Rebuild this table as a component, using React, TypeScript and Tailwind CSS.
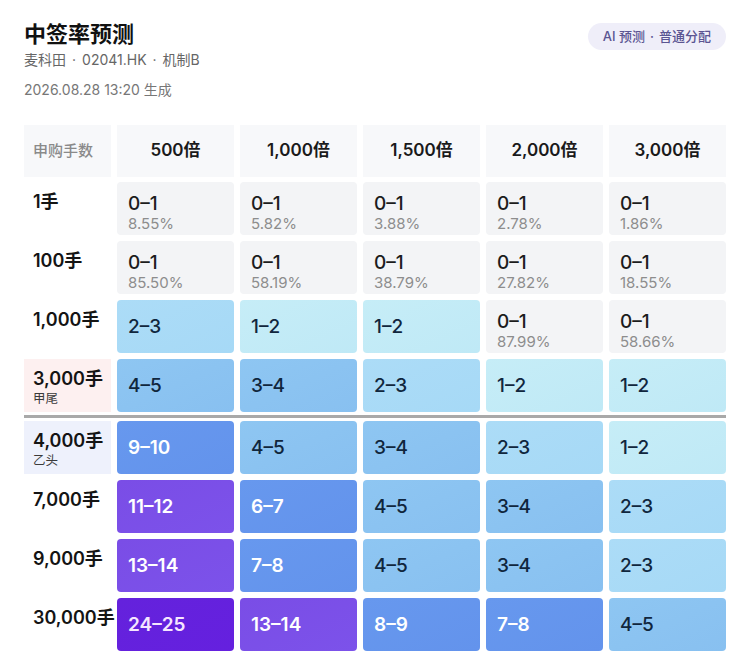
import React from 'react'

type Level = 0 | 1 | 2 | 3 | 4 | 5 | 6

type Cell = { v: string; pct?: string; lv: Level }

type Row = { label: string; sub?: string; tone?: 'pink' | 'blue'; cells: Cell[] }

const multiples = ['500倍', '1,000倍', '1,500倍', '2,000倍', '3,000倍']

const levelClass: Record<Level, string> = {
  0: 'bg-[#f3f4f6] text-[#1c1c1c]',
  1: 'bg-gradient-to-br from-[#c6edf7] to-[#bfe9f6] text-[#10263d]',
  2: 'bg-gradient-to-br from-[#acdcf7] to-[#a6d9f6] text-[#10263d]',
  3: 'bg-gradient-to-br from-[#8ec6f2] to-[#88c0f0] text-[#10263d]',
  4: 'bg-gradient-to-br from-[#6798ee] to-[#6393ec] text-white font-semibold',
  5: 'bg-gradient-to-br from-[#7a4de6] to-[#7c52ea] text-white font-semibold',
  6: 'bg-gradient-to-br from-[#6422dc] to-[#6520df] text-[#f6e6ff] font-semibold',
}

const g = (pct: string): Cell => ({ v: '0–1', pct, lv: 0 })
const c = (v: string, lv: Level): Cell => ({ v, lv })

const topRows: Row[] = [
  { label: '1手', cells: [g('8.55%'), g('5.82%'), g('3.88%'), g('2.78%'), g('1.86%')] },
  { label: '100手', cells: [g('85.50%'), g('58.19%'), g('38.79%'), g('27.82%'), g('18.55%')] },
  { label: '1,000手', cells: [c('2–3', 2), c('1–2', 1), c('1–2', 1), g('87.99%'), g('58.66%')] },
  { label: '3,000手', sub: '甲尾', tone: 'pink', cells: [c('4–5', 3), c('3–4', 3), c('2–3', 2), c('1–2', 1), c('1–2', 1)] },
]

const bottomRows: Row[] = [
  { label: '4,000手', sub: '乙头', tone: 'blue', cells: [c('9–10', 4), c('4–5', 3), c('3–4', 3), c('2–3', 2), c('1–2', 1)] },
  { label: '7,000手', cells: [c('11–12', 5), c('6–7', 4), c('4–5', 3), c('3–4', 3), c('2–3', 2)] },
  { label: '9,000手', cells: [c('13–14', 5), c('7–8', 4), c('4–5', 3), c('3–4', 3), c('2–3', 2)] },
  { label: '30,000手', cells: [c('24–25', 6), c('13–14', 5), c('8–9', 4), c('7–8', 4), c('4–5', 3)] },
]

const TableRow = ({ row }: { row: Row }) => {
  const toneBg = row.tone === 'pink' ? 'bg-[#fdf0f0]' : row.tone === 'blue' ? 'bg-[#eef1fc]' : ''
  return (
    <div className="grid grid-cols-[87px_repeat(5,117px)] gap-[6px] h-[53px]">
      <div className={`pl-[9px] pt-[8px] whitespace-nowrap ${toneBg}`}>
        <div className="text-[18px] leading-[24px] font-semibold text-[#141414]">{row.label}</div>
        {row.sub && <div className="text-[12.5px] leading-[15px] text-[#3a3a3a]">{row.sub}</div>}
      </div>
      {row.cells.map((cell, i) => (
        <div
          key={i}
          className={`rounded-[4px] pl-[11px] flex flex-col font-medium ${
            cell.pct ? 'justify-start pt-[11px]' : 'justify-center'
          } ${levelClass[cell.lv]}`}
        >
          <div className="text-[19px] leading-[22px]">{cell.v}</div>
          {cell.pct && <div className="text-[15px] leading-[17px] font-normal text-[#8d8d8d]">{cell.pct}</div>}
        </div>
      ))}
    </div>
  )
}

const Dot = () => <span className="mx-[6px]">·</span>

export default function App() {
  return (
    <div
      className="w-[750px] h-[665px] bg-white px-[24px] pt-[20px] overflow-hidden"
      style={{ fontFamily: 'Inter, "Noto Sans CJK SC", sans-serif' }}
    >
      {/* Header */}
      <div className="flex items-start justify-between">
        <div>
          <h1 className="text-[22px] leading-[28px] font-bold text-[#111]">中签率预测</h1>
          <p className="mt-[2px] text-[14px] leading-[20px] text-[#666]">
            麦科田<Dot />02041.HK<Dot />机制B
          </p>
          <p className="mt-[10px] text-[14px] leading-[20px] text-[#777]">2026.08.28 13:20 生成</p>
        </div>
        <div className="mt-[3px] h-[27px] px-[15px] rounded-full bg-[#efeef9] text-[#5b5592] text-[13px] font-medium flex items-center">
          AI 预测<span className="mx-[5px]">·</span>普通分配
        </div>
      </div>

      {/* Table */}
      <div className="mt-[25px]">
        <div className="grid grid-cols-[87px_repeat(5,117px)] gap-[6px] h-[52px]">
          <div className="bg-[#f7f8fa] pl-[9px] flex items-center text-[15px] font-medium text-[#8a8a8a]">申购手数</div>
          {multiples.map((m) => (
            <div key={m} className="bg-[#f7f8fa] flex items-center justify-center text-[17px] font-semibold text-[#1a1a1a]">
              {m}
            </div>
          ))}
        </div>

        <div className="mt-[5px] flex flex-col gap-[6px]">
          {topRows.map((r) => (
            <TableRow key={r.label} row={r} />
          ))}
        </div>

        <div className="mt-[3px] h-[3px] bg-[#a9a9a9]" />

        <div className="mt-[3px] flex flex-col gap-[6px]">
          {bottomRows.map((r) => (
            <TableRow key={r.label} row={r} />
          ))}
        </div>
      </div>
    </div>
  )
}
